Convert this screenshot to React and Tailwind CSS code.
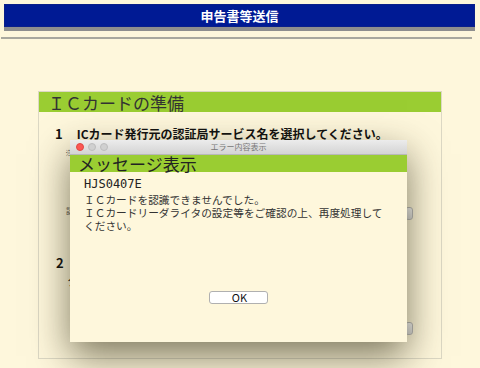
import React from 'react';

const jp = { fontFamily: '"Noto Sans CJK JP", "Noto Sans", sans-serif' };

function SelectStub({ top }) {
  // only the right tip of the select control peeks out from behind the dialog
  return (
    <div
      className={`absolute right-[28px] w-[8px] h-[13px] rounded-[3px] border border-[#b8b8b8] bg-gradient-to-b from-[#f4f4f4] to-[#d8d8d8] ${top}`}
    />
  );
}

function ErrorDialog() {
  return (
    <div className="absolute left-[70px] top-[140px] w-[337px] h-[202px] bg-[#fef7dc] shadow-[0_14px_36px_rgba(40,35,10,0.6)] flex flex-col">
      <div className="relative h-[15px] bg-gradient-to-b from-[#ececec] to-[#d4d4d4] border-b border-[#b8b8b8] flex items-center justify-center">
        <div className="absolute left-[6px] top-[3px] flex gap-[4px]">
          <span className="w-[8px] h-[8px] rounded-full bg-[#fc5753] border border-[#df4744]" />
          <span className="w-[8px] h-[8px] rounded-full bg-[#d0d0d0] border border-[#bdbdbd]" />
          <span className="w-[8px] h-[8px] rounded-full bg-[#d0d0d0] border border-[#bdbdbd]" />
        </div>
        <span className="text-[8px] leading-none text-[#777]">エラー内容表示</span>
      </div>
      <div className="h-[17px] bg-[#9acd32] flex items-center pl-[8px]">
        <span className="text-[17px] leading-none text-[#222]">メッセージ表示</span>
      </div>
      <div className="pl-[14px] pt-[5px] text-[#222]">
        <div className="text-[12px] leading-[15px]" style={{ fontFamily: '"DejaVu Sans Mono", monospace' }}>HJS0407E</div>
        <div className="mt-[1px] text-[10.7px] leading-[13px] text-[#333]">
          <div>ＩＣカードを認識できませんでした。</div>
          <div>ＩＣカードリーダライタの設定等をご確認の上、再度処理して</div>
          <div>ください。</div>
        </div>
      </div>
      <div className="flex justify-center mt-[59px]">
        <button className="w-[59px] h-[13px] bg-white border border-[#b0b0b0] rounded-[3px] text-[11px] leading-none text-[#111] pl-[2px]">OK</button>
      </div>
    </div>
  );
}

export default function App() {
  return (
    <div className="relative w-[480px] h-[368px] overflow-hidden bg-[#fef7dc]" style={jp}>
      <div className="pt-[4px] px-[4px] pr-[5px]">
        <div className="h-[23px] bg-[#001a94] border border-[#0a1f8a] shadow-[0_4px_0_#8e8e8e] flex items-center justify-center">
          <span className="text-white font-bold text-[13px] leading-none">申告書等送信</span>
        </div>
      </div>
      <div className="mt-[10px] ml-[1px] w-[471px] h-[2px] bg-[#a9a89e]" />

      <div className="relative mt-[52px] ml-[38px] w-[404px] h-[268px] border border-[#dcd8c4]">
        <div className="h-[20px] bg-[#9acd32] flex items-center pl-[9px]">
          <span className="text-[17px] leading-none text-[#333]">ＩＣカードの準備</span>
        </div>
        <div className="flex items-center gap-[14px] pl-[16px] mt-[15px] text-[12px] font-bold text-[#111] leading-none">
          <span className="text-[13px]">1</span>
          <span>ICカード発行元の認証局サービス名を選択してください。</span>
        </div>
        <div className="pl-[26px] mt-[9px] text-[8px] text-[#555] leading-none">※</div>
        <div className="pl-[27px] mt-[50px] text-[8px] text-[#555] leading-none">認</div>
        <SelectStub top="top-[115px]" />
        <div className="pl-[17px] mt-[41px] text-[13px] font-bold text-[#111] leading-none">2</div>
        <div className="pl-[28px] mt-[6px] text-[12px] text-[#111] leading-none">ク</div>
        <SelectStub top="top-[230px]" />
      </div>

      <ErrorDialog />
    </div>
  );
}
